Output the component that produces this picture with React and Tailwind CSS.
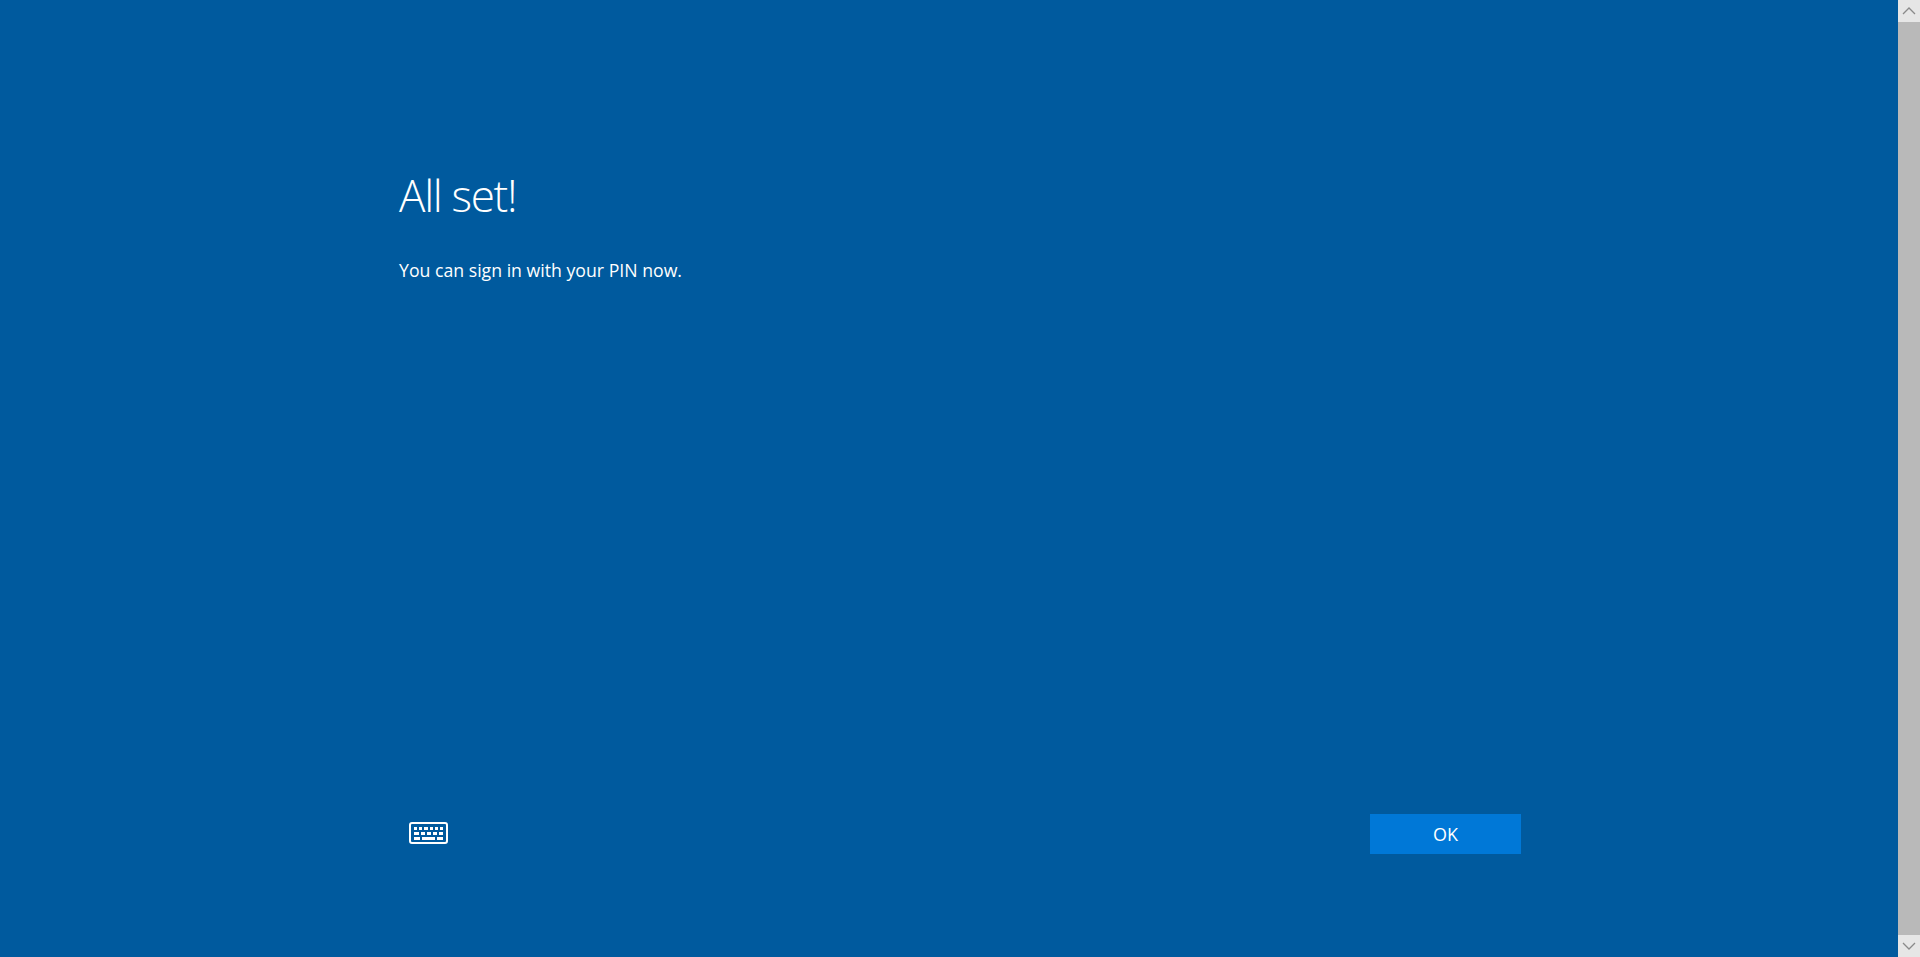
import React from 'react';

function KeyboardIcon() {
  const rows = [
    [[5, 5, 3], [10, 5, 3], [15, 5, 4], [21, 5, 3], [26, 5, 3], [31, 5, 3]],
    [[5, 10, 5], [12, 10, 4], [18, 10, 4], [24, 10, 4], [30, 10, 4]],
    [[5, 15, 6], [13, 15, 13], [28, 15, 6]],
  ];
  return (
    <svg width="39" height="22" viewBox="0 0 39 22" fill="none">
      <rect x="1" y="1" width="37" height="20" rx="2" stroke="white" strokeWidth="2" />
      {rows.flat().map(([x, y, w], i) => (
        <rect key={i} x={x} y={y} width={w} height="3" fill="white" />
      ))}
    </svg>
  );
}

function Chevron({ up }) {
  return (
    <svg width="14" height="8" viewBox="0 0 14 8" fill="none">
      <path d={up ? 'M1 7L7 1L13 7' : 'M1 1L7 7L13 1'} stroke="#8a8a8a" strokeWidth="1.3" />
    </svg>
  );
}

export default function App() {
  return (
    <div className="flex h-[957px] w-full overflow-hidden bg-[#005a9e] font-['Open_Sans',sans-serif] text-white">
      <div className="flex flex-1 flex-col pl-[399px] pr-[377px] pt-[166px] pb-[103px]">
        <h1 className="text-[44px] leading-[58px] font-light tracking-[-1.3px]">All set!</h1>
        <p className="mt-[34px] text-[17.7px] leading-[24px]">You can sign in with your PIN now.</p>

        {/* Footer */}
        <div className="mt-auto flex items-center justify-between">
          <button className="mb-[2px] ml-[10px] flex">
            <KeyboardIcon />
          </button>
          <button className="h-10 w-[151px] bg-[#0078d7] text-[18px]">OK</button>
        </div>
      </div>

      {/* Scrollbar */}
      <div className="flex w-[22px] flex-col bg-[#e6e6e6]">
        <div className="flex h-[22px] items-center justify-center">
          <Chevron up />
        </div>
        <div className="flex-1 bg-[#b9b9b9]"></div>
        <div className="flex h-[22px] items-center justify-center">
          <Chevron />
        </div>
      </div>
    </div>
  );
}
